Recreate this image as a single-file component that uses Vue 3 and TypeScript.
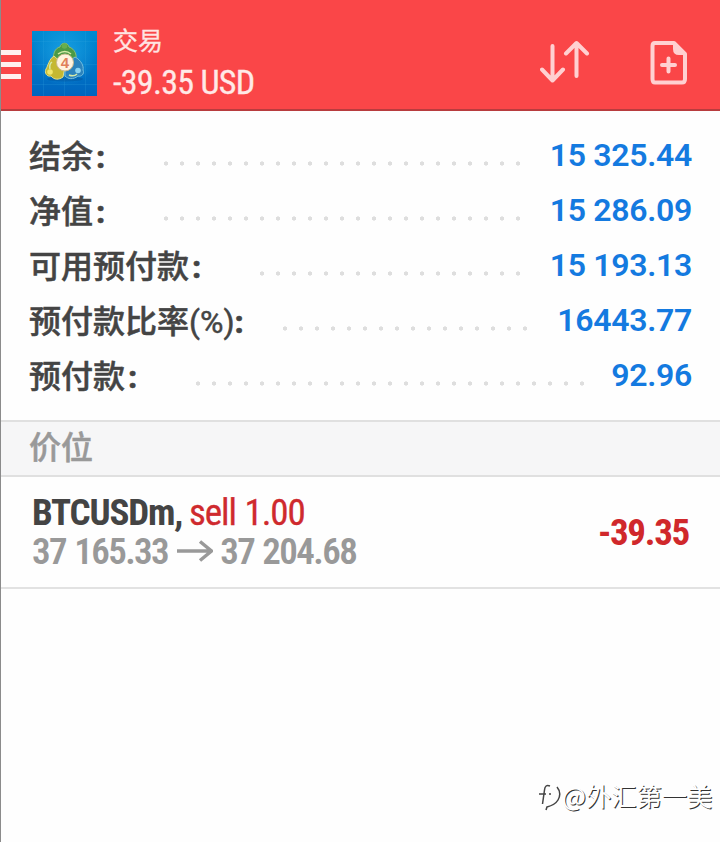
<script setup lang="ts">
interface Metric {
  label: string
  suffix?: string
  value: string
  dots: number
  gap: number
}

const metrics: Metric[] = [
  { label: '结余', value: '15 325.44', dots: 23, gap: 166 },
  { label: '净值', value: '15 286.09', dots: 23, gap: 166 },
  { label: '可用预付款', value: '15 193.13', dots: 17, gap: 166 },
  { label: '预付款比率', suffix: '(%)', value: '16443.77', dots: 16, gap: 159 },
  { label: '预付款', value: '92.96', dots: 25, gap: 102 },
]
</script>

<template>
  <main class="screen">
    <header class="bar">
      <div class="menu"><i></i><i></i><i></i></div>
      <svg class="logo" width="65" height="65" viewBox="0 0 65 65">
        <defs>
          <linearGradient id="sky" x1="0" y1="0" x2="0" y2="1">
            <stop offset="0" stop-color="#008bd2" />
            <stop offset="1" stop-color="#0064be" />
          </linearGradient>
          <radialGradient id="glow" cx=".5" cy=".35" r=".5">
            <stop offset="0" stop-color="#20a8e8" stop-opacity=".8" />
            <stop offset="1" stop-color="#20a8e8" stop-opacity="0" />
          </radialGradient>
        </defs>
        <rect width="65" height="65" fill="url(#sky)" />
        <rect width="65" height="65" fill="url(#glow)" />
        <path d="M11.500 0V65M32.500 0V65M53.500 0V65M0 10.500H65M0 33.500H65M0 53.500H65" stroke="#37a9df" stroke-opacity=".2" fill="none" />
        <ellipse cx="33" cy="48" rx="18" ry="2.500" fill="#04488c" opacity=".35" />
        <path d="M22 33C20 23 23 17 28 16C29 11 36 11 37 16C43 18 46 24 43 33Z" fill="#4b9a45" stroke="#8dbd70" stroke-width="1" />
        <path d="M22 25C17 28 16 35 14 38C12 42 15 46 19 45C22 49 27 49 31 46L33 35Z" fill="#c5b832" stroke="#e2df8c" stroke-width="1" />
        <path d="M43 26C49 29 52 35 51 39C53 43 49 46 46 45C41 49 36 48 33 45L33 33Z" fill="#2c83bd" stroke="#74bfdf" stroke-width="1" />
        <path d="M26 23Q33 18 39 23M18 38Q17 33 20 31M37 44Q42 46 45 43" stroke="#d5eaa8" stroke-width="1.500" fill="none" />
        <circle cx="32.500" cy="15" r="2.800" fill="#69ae4c" />
        <circle cx="18" cy="41" r="2.800" fill="#f1e66b" />
        <circle cx="46" cy="39.500" r="2.800" fill="#8bd3f2" />
        <circle cx="33" cy="31.500" r="8.500" fill="#fff3df" stroke="#cbb88b" />
        <text x="33" y="37" text-anchor="middle" class="four">4</text>
      </svg>
      <div class="heading">
        <div class="title">交易</div>
        <div class="profit">-39.35 USD</div>
      </div>
      <svg class="sort" width="50" height="46" viewBox="0 0 50 46">
        <path d="M12.500 8V42M2 31.500L12.500 42.500L23 31.500M36.500 38V5M26 15.500L36.500 5L47 15.500" />
      </svg>
      <svg class="add" width="38" height="46" viewBox="0 0 38 46">
        <path d="M5 3H24L35 14V39Q35 42.500 32 42.500H5Q2.500 42.500 2.500 39V6Q2.500 3 5 3Z" />
        <path d="M24 3L35 14H29Q24 14 24 9Z" class="fold" />
        <path d="M18.500 18.500V31.500M12 25H25" />
      </svg>
    </header>

    <section class="metrics">
      <div v-for="m in metrics" :key="m.label" class="metric">
        <span class="label">{{ m.label }}<span v-if="m.suffix" class="suffix">{{ m.suffix }}</span><span class="colon" :class="{ tight: m.suffix }">:</span></span>
        <span class="trail">
          <span class="dots" :style="{ width: m.dots * 16 + 'px' }"></span>
          <span class="value" :style="{ width: m.gap + 'px' }">{{ m.value }}</span>
        </span>
      </div>
    </section>

    <h2 class="section">价位</h2>

    <article class="position">
      <div class="deal">
        <div class="order"><span class="symbol">BTCUSDm,</span><span class="side">sell 1.00</span></div>
        <div class="prices">
          <span class="price">37 165.33</span>
          <svg class="arrow" width="36" height="22" viewBox="0 0 36 22"><path d="M0 11H34M23 1.500L34.500 11L23 20.500" /></svg>
          <span class="price">37 204.68</span>
        </div>
      </div>
      <div class="loss">-39.35</div>
    </article>

    <div class="watermark">
      <svg width="25" height="34" viewBox="0 0 25 34">
        <path d="M13 8Q8 6 7.500 12L5.500 26M2 16H9M12 16H14" />
        <path d="M20 9Q25 15 21 22Q18 27 10 29L9 32" />
      </svg>
      <span>@外汇第一美</span>
    </div>
  </main>
</template>

<style>
body { margin: 0; background: #fefefe; }
</style>

<style scoped>
.screen { position: relative; width: 720px; height: 842px; box-sizing: border-box; border-left: 1px solid #8b8b8b; overflow: hidden; background: #fefefe; font-family: Roboto, "Noto Sans CJK SC", sans-serif; }
.bar { display: flex; align-items: flex-start; height: 111px; box-sizing: border-box; border-bottom: 2px solid #b83c3e; background: #fa4648; margin-left: -1px; border-left: 1px solid #a93234; }
.menu { display: grid; gap: 7px; width: 20px; margin-top: 50px; flex: none; }
.menu i { height: 5px; background: #fff0ef; }
.logo { margin: 31px 0 0 11px; flex: none; }
.four { font: bold 15px "Liberation Sans", sans-serif; fill: #e0805a; }
.heading { margin: 27px 0 0 16px; width: 160px; flex: none; }
.title { font-size: 25px; line-height: 30px; color: #ffe4e2; -webkit-text-stroke: .3px #ffe4e2; }
.profit { margin-top: 5px; font-size: 34px; line-height: 40px; font-stretch: 75%; letter-spacing: -.7px; color: #ffe9e7; -webkit-text-stroke: .3px #ffe9e7; white-space: nowrap; }
.sort { margin: 38px 0 0 267px; }
.add { margin: 40px 0 0 60px; }
.sort, .add { fill: none; stroke: #ffd0d1; stroke-width: 4px; stroke-linecap: round; stroke-linejoin: round; flex: none; }
.add .fold { fill: #ffd0d1; stroke-width: 2px; }
.metrics { height: 309px; box-sizing: border-box; padding: 17px 28px 0 28px; }
.metric { display: flex; justify-content: space-between; height: 55px; }
.label { padding-top: 1px; font: 500 32px/56px Roboto, "Noto Sans CJK SC", sans-serif; color: #444; -webkit-text-stroke: .5px #444; white-space: nowrap; }
.colon { margin-left: 3px; font-weight: 800; }
.colon.tight { margin-left: 0; }
.suffix { font-weight: 400; }
.trail { display: flex; }
.dots { height: 5px; margin-top: 33px; background: radial-gradient(circle at 8px 2.500px, #dedede 1.800px, transparent 2.500px) 0 0 / 16px 5px repeat-x; }
.value { font-size: 32px; line-height: 55px; font-weight: 600; letter-spacing: -.3px; text-align: right; color: #147ae0; }
.section { margin: 0; height: 57px; box-sizing: border-box; padding-left: 28px; border-top: 2px solid #e0e0e0; border-bottom: 2px solid #e0e0e0; background: #f6f6f7; color: #999; font: 500 32px/47px "Noto Sans CJK SC", sans-serif; -webkit-text-stroke: .5px #999; }
.position { display: flex; justify-content: space-between; height: 112px; box-sizing: border-box; padding: 16px 31px 0 31px; border-bottom: 2px solid #e2e2e2; font-size: 37px; font-stretch: 75%; white-space: nowrap; }
.order, .prices { display: flex; height: 39px; line-height: 39px; }
.symbol { width: 157px; letter-spacing: -1.15px; font-weight: 700; color: #444; }
.side { letter-spacing: -1.05px; word-spacing: 1px; color: #cf2a2e; -webkit-text-stroke: .3px #cf2a2e; }
.prices { font-weight: 600; color: #999; }
.price { letter-spacing: -1.6px; word-spacing: 1.2px; }
.arrow { margin: 8px 7px 0 9px; fill: none; stroke: #999; stroke-width: 3.500px; }
.loss { padding-top: 20px; line-height: 39px; font-weight: 700; letter-spacing: -1.3px; color: #d0282b; }
.watermark { position: absolute; left: 536px; top: 778px; display: flex; color: #fff; font: 25.3px/34px "Noto Sans CJK SC", sans-serif; text-shadow: 1px 1px 0 #333; white-space: nowrap; }
.watermark path { fill: none; stroke: #444; stroke-width: 1.500px; }
</style>
